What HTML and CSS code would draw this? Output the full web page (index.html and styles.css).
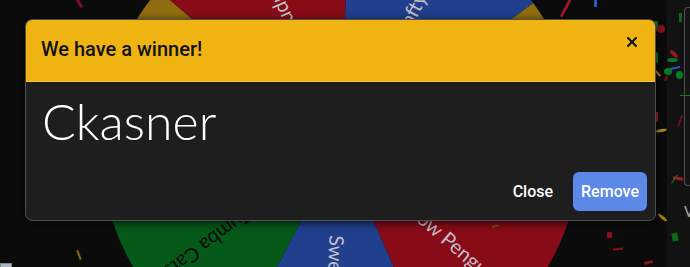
FILE: index.html
```html
<!DOCTYPE html>
<html lang="en">
<head>
  <meta charset="UTF-8">
  <title>Wheel - Winner</title>
  <link rel="stylesheet" href="styles.css">
</head>
<body>
  <div id="page">
    <!-- Wheel area -->
    <div id="wheel-area">
      <svg id="wheel" width="667" height="267" viewBox="0 0 667 267">
        <g transform="rotate(2 340.5 146)">
          <path class="seg blue" d="M340.5 146 L340.5 -94 A240 240 0 0 1 528.1 -3.6 Z"/>
          <path class="seg yellow" d="M340.5 146 L528.1 -3.6 A240 240 0 0 1 574.5 199.4 Z"/>
          <path class="seg red" d="M340.5 146 L574.5 199.4 A240 240 0 0 1 444.6 362.2 Z"/>
          <path class="seg blue" d="M340.5 146 L444.6 362.2 A240 240 0 0 1 236.4 362.2 Z"/>
          <path class="seg green" d="M340.5 146 L236.4 362.2 A240 240 0 0 1 106.5 199.4 Z"/>
          <path class="seg yellow" d="M340.5 146 L106.5 199.4 A240 240 0 0 1 152.9 -3.6 Z"/>
          <path class="seg red" d="M340.5 146 L152.9 -3.6 A240 240 0 0 1 340.5 -94 Z"/>

          <text class="label light" x="548.5" y="146" transform="rotate(-64.29 340.5 146)">Crafty Fox</text>
          <text class="label dark" x="565.5" y="146" transform="rotate(-12.86 340.5 146)">Lucky Duck</text>
          <text class="label light" x="548.5" y="146" transform="rotate(38.57 340.5 146)">Yellow Penguin</text>
          <text class="label light" x="566.5" y="146" transform="rotate(90 340.5 146)">Sweet Potatoes</text>
          <text class="label dark" x="556.5" y="146" transform="rotate(141.43 340.5 146)">Zumba Cats</text>
          <text class="label dark" x="565.5" y="146" transform="rotate(192.86 340.5 146)">Happy Hippo</text>
          <text class="label light" x="565.5" y="146" transform="rotate(244.29 340.5 146)">Mudpuppies</text>
        </g>
      </svg>
      <div class="corner-thumb"></div>
    </div>

    <!-- Side panel (names list) -->
    <div id="side">
      <div class="names-box"></div>
      <div class="side-label">V</div>
    </div>

    <!-- Confetti -->
    <div id="confetti">
      <i style="left:78px;top:-1px;width:3px;height:9px;background:#7a1424;transform:rotate(-30deg)"></i>
      <i style="left:564px;top:-1px;width:3px;height:19px;background:#9c1626;transform:rotate(28deg)"></i>
      <i style="left:594px;top:-1px;width:3px;height:8px;background:#2c58c4"></i>
      <i style="left:653px;top:21px;width:5px;height:10px;background:#0a7a22;border-radius:2px"></i>
      <i style="left:654px;top:52px;width:4px;height:11px;background:#0a7a22;border-radius:2px"></i>
      <i style="left:679px;top:13px;width:3px;height:9px;background:#0a6a1c"></i>
      <i style="left:657px;top:25px;width:8px;height:8px;background:#8b1020;border-radius:50%"></i>
      <i style="left:669px;top:52px;width:10px;height:4px;background:#9a1525;border-radius:50%;transform:rotate(45deg)"></i>
      <i style="left:667px;top:58px;width:11px;height:4px;background:#0b7a22;border-radius:50%"></i>
      <i style="left:670px;top:67px;width:10px;height:2px;background:#2b55c8;transform:rotate(-12deg)"></i>
      <i style="left:664px;top:68px;width:8px;height:7px;background:#0a7a22;border-radius:50%"></i>
      <i style="left:676px;top:71px;width:7px;height:8px;background:#0a7a22;border-radius:50%"></i>
      <i style="left:657px;top:70px;width:2px;height:7px;background:#b08a10;transform:rotate(-40deg)"></i>
      <i style="left:665px;top:76px;width:2px;height:5px;background:#8b1020;transform:rotate(20deg)"></i>
      <i style="left:680px;top:95px;width:10px;height:1px;background:#107a20"></i>
      <i style="left:655px;top:112px;width:3px;height:10px;background:#a01828"></i>
      <i style="left:679px;top:115px;width:2px;height:12px;background:#6a1020;transform:rotate(20deg)"></i>
      <i style="left:656px;top:129px;width:11px;height:3px;background:#b08a10;border-radius:50%;transform:rotate(-10deg)"></i>
      <i style="left:673px;top:177px;width:10px;height:3px;background:#a01828;transform:rotate(8deg)"></i>
      <i style="left:674px;top:174px;width:1px;height:10px;background:#107a20;transform:rotate(35deg)"></i>
      <i style="left:492px;top:225px;width:7px;height:2px;background:#7a5a10;transform:rotate(-15deg)"></i>
      <i style="left:607px;top:232px;width:5px;height:6px;background:#8a1020;transform:rotate(10deg)"></i>
      <i style="left:613px;top:248px;width:10px;height:2px;background:#8a1020;transform:rotate(-5deg)"></i>
      <i style="left:657px;top:216px;width:11px;height:3px;background:#a08010;border-radius:50%;transform:rotate(40deg)"></i>
      <i style="left:672px;top:233px;width:6px;height:8px;background:#0a6a1a;transform:rotate(-10deg)"></i>
      <i style="left:644px;top:261px;width:9px;height:3px;background:#8a1020;transform:rotate(-15deg)"></i>
      <i style="left:78px;top:250px;width:2px;height:10px;background:#8a6a10;transform:rotate(-20deg)"></i>
    </div>

    <!-- Winner dialog -->
    <div class="modal">
      <div class="modal-head">
        <div class="modal-title">We have a winner!</div>
        <button class="modal-x" aria-label="Close">
          <svg width="10" height="10" viewBox="0 0 10 10">
            <path d="M1 1 L9 9 M9 1 L1 9" stroke="#111" stroke-width="2" stroke-linecap="square"/>
          </svg>
        </button>
      </div>
      <div class="modal-body">
        <div class="winner-name">Ckasner</div>
        <div class="modal-foot">
          <button class="btn btn-text">Close</button>
          <button class="btn btn-primary">Remove</button>
        </div>
      </div>
    </div>
  </div>
</body>
</html>
```

FILE: styles.css
```css
html, body {
  margin: 0;
  padding: 0;
  height: 100%;
  overflow: hidden;
  background: #0b0b0b;
  font-family: Roboto, "Liberation Sans", sans-serif;
}

#page {
  position: relative;
  display: flex;
  width: 690px;
  height: 267px;
}

/* the wheel sits behind everything */
#wheel-area {
  position: relative;
  width: 667px;
  height: 267px;
  overflow: hidden;
}

#wheel {
  display: block;
}

.seg.red { fill: #880b18; }
.seg.blue { fill: #203f8d; }
.seg.yellow { fill: #906e0f; }
.seg.green { fill: #065a19; }

.label {
  font-family: Lato, "Open Sans", sans-serif;
  font-size: 20px;
  text-anchor: end;
  dominant-baseline: central;
}

.label.light { fill: #c4bfc6; }
.label.dark { fill: #0b0b0b; }

.corner-thumb {
  position: absolute;
  left: 0;
  bottom: -3px;
  width: 12px;
  height: 7px;
  background: #aab6c2;
  border: 1px solid #7d8a96;
  box-sizing: border-box;
}

/* right hand panel */
#side {
  width: 23px;
  height: 267px;
  background: #121212;
  padding: 7px 0 0 17px;
  box-sizing: border-box;
}

.names-box {
  height: 177px;
  border: 1px solid #4e4e4e;
  border-right: none;
  border-radius: 4px 0 0 4px;
  background: #151515;
}

.side-label {
  margin-top: 17px;
  font-size: 15px;
  color: #a9a9a9;
  line-height: 18px;
}

#confetti {
  position: absolute;
  inset: 0;
  pointer-events: none;
  overflow: hidden;
}

#confetti i {
  position: absolute;
  display: block;
}

/* Winner popup */
.modal {
  position: absolute;
  left: 25px;
  top: 19px;
  width: 631px;
  height: 202px;
  box-sizing: border-box;
  display: flex;
  flex-direction: column;
  background: #1e1e1e;
  border: 1px solid #4f4f4f;
  border-radius: 7px;
  box-shadow: 0 2px 10px rgba(0, 0, 0, 0.7);
  overflow: hidden;
}

.modal-head {
  display: flex;
  justify-content: space-between;
  align-items: flex-start;
  box-sizing: border-box;
  height: 62px;
  padding: 17px 18px 0 15px;
  background: #efb312;
  border-bottom: 1px solid #f6c63e;
}

.modal-title {
  font-size: 20px;
  font-weight: 500;
  line-height: 24px;
  color: #111;
}

.modal-x {
  display: flex;
  padding: 0;
  border: none;
  background: none;
  cursor: pointer;
}

.modal-body {
  flex: 1;
  display: flex;
  flex-direction: column;
  padding: 14px 8px 9px 16px;
}

.winner-name {
  font-family: Lato, "Open Sans", sans-serif;
  font-weight: 300;
  font-size: 50px;
  line-height: 50px;
  color: #fff;
}

.modal-foot {
  margin-top: auto;
  display: flex;
  justify-content: flex-end;
  gap: 8px;
}

.btn {
  height: 39px;
  border: none;
  border-radius: 6px;
  font-family: Roboto, "Liberation Sans", sans-serif;
  font-size: 16px;
  font-weight: 500;
  color: #fff;
  cursor: pointer;
}

.btn-text {
  padding: 0 12px;
  background: none;
}

.btn-primary {
  padding: 0 8px;
  background: #5c88e8;
}
```
